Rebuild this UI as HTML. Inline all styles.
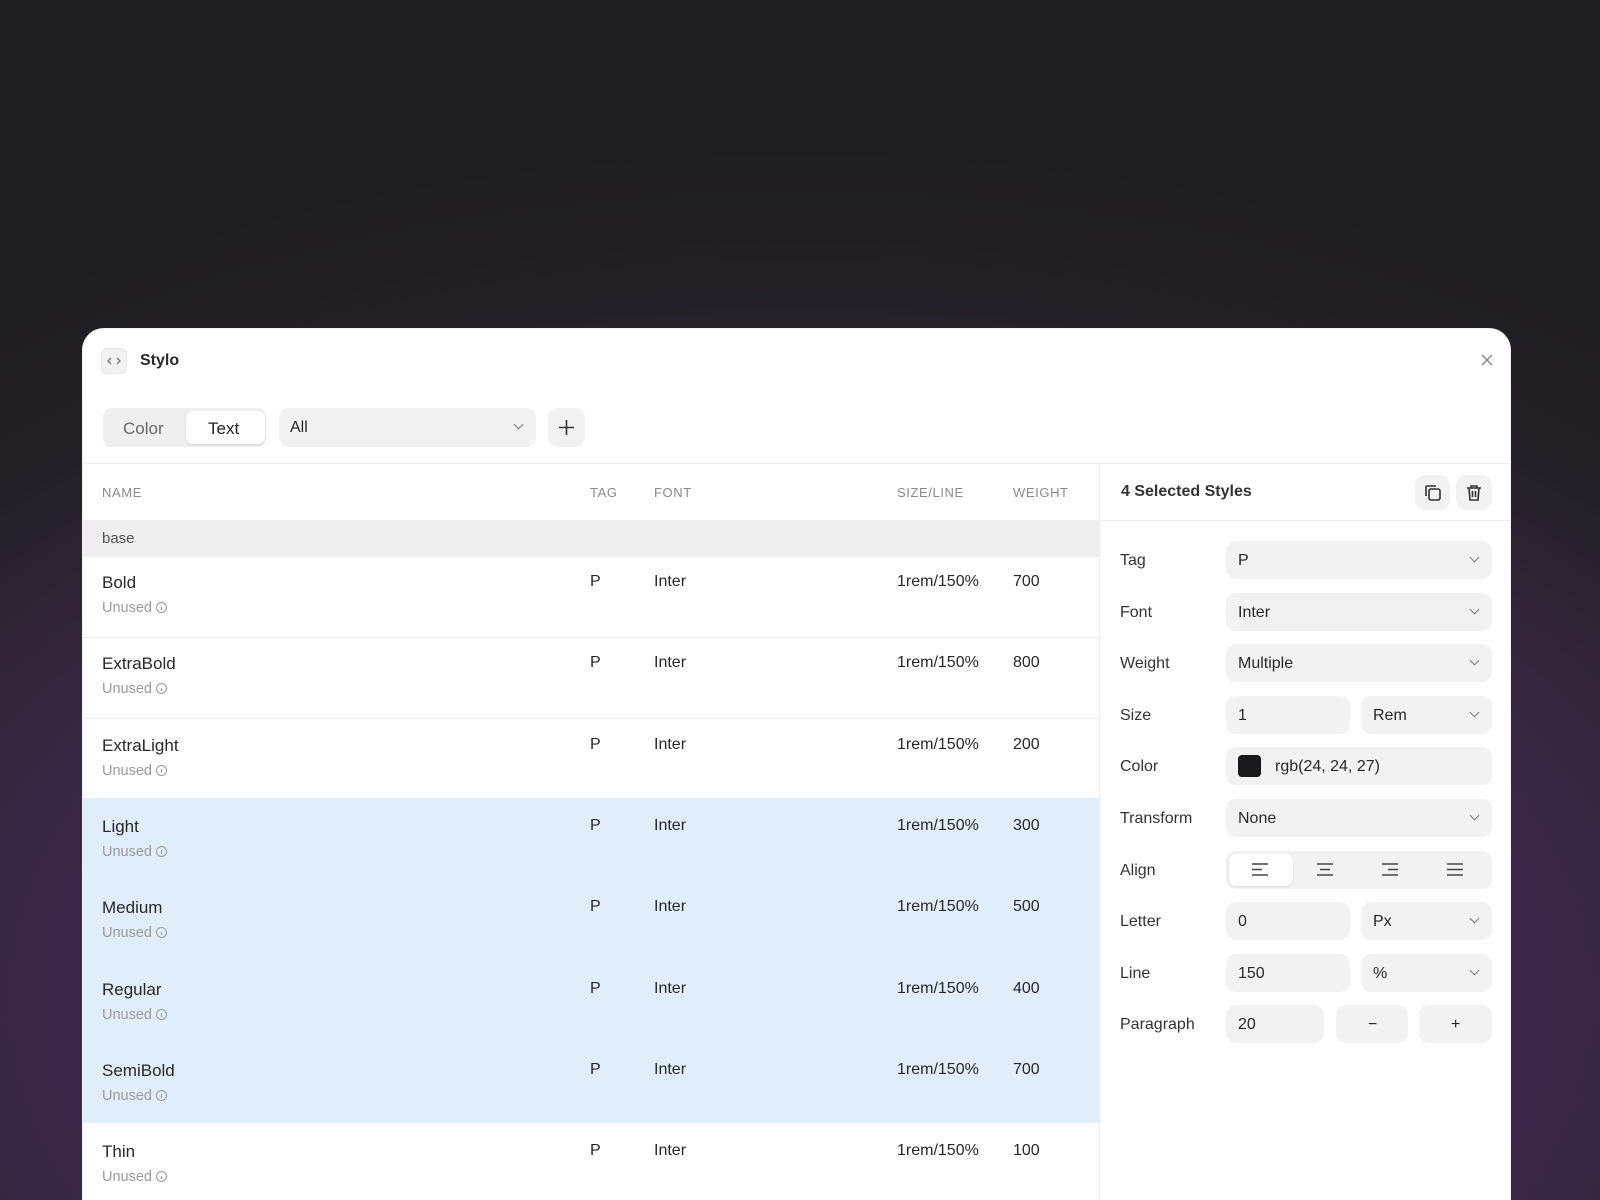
<!DOCTYPE html>
<html style="width:1600px;height:1200px;overflow:hidden;background:radial-gradient(ellipse 1400px 860px at 800px 1000px,#4a2c60 0%,#442a56 40%,#36273f 62%,#242027 82%,#1e1e20 100%) #1e1e20"><head><meta charset="utf-8"><style>
*{box-sizing:border-box;margin:0;padding:0}
body{width:1600px;height:1200px;overflow:hidden;position:relative;font-family:"Liberation Sans",sans-serif;color:#27272a;background:transparent}
.a{position:absolute}
.panel{left:82px;top:328px;width:1429px;height:872px;background:#fff;border-radius:22px 22px 0 0;border:1px solid #f0f0f0;border-bottom:none;overflow:hidden}
.ctl{background:#f2f2f2;border-radius:10px;height:38px}
.lbl{font-size:16px;color:#333}
.val{font-size:16px;color:#27272a}
.hdr{font-size:13px;color:#8a8a8a;letter-spacing:.6px}
.nm{font-size:17px;color:#27272a}
.un{font-size:14.5px;color:#9a9a9a}
.info{display:inline-block;width:11px;height:11px;border:1.2px solid #9a9a9a;border-radius:50%;vertical-align:-1px;margin-left:4px;position:relative}
.info:after{content:"";position:absolute;left:3.6px;top:3.5px;width:1.2px;height:3.5px;background:#9a9a9a}
.chev{position:absolute;right:14px;top:13px;width:7px;height:7px;border-right:1.5px solid #777;border-bottom:1.5px solid #777;transform:rotate(45deg)}
</style></head><body>
<div class="a panel">
 <div class="a" style="left:18px;top:19px;width:26px;height:26px;background:#f2f2f2;border-radius:6px;border:1px solid #e6e6e6"><svg width="26" height="26" class="a" style="left:-1px;top:-1px"><path d="M10 10l-3 3 3 3M16 10l3 3-3 3" fill="none" stroke="#777" stroke-width="1.3"/></svg></div>
 <div class="a" style="left:57px;top:23px;font-size:16px;font-weight:bold;color:#2a2a2a">Stylo</div>
 <svg class="a" style="left:1397px;top:24px" width="14" height="14"><path d="M2 2l10 10M12 2L2 12" stroke="#888" stroke-width="1.5"/></svg>
 <div class="a" style="left:20px;top:79px;width:163px;height:39px;background:#efefef;border-radius:9px"></div>
 <div class="a" style="left:103px;top:82px;width:79px;height:33px;background:#fff;border-radius:7px;box-shadow:0 1px 2px rgba(0,0,0,.12)"></div>
 <div class="a" style="left:40px;top:90px;font-size:17px;color:#666">Color</div>
 <div class="a" style="left:125px;top:90px;font-size:17px;color:#222">Text</div>
 <div class="a ctl" style="left:196px;top:79px;width:257px;height:39px"><span class="a val" style="left:11px;top:11px">All</span><div class="chev" style="top:13px"></div></div>
 <div class="a ctl" style="left:465px;top:79px;width:37px;height:39px"><svg class="a" style="left:10px;top:11px" width="17" height="17"><path d="M8.5 1v15M1 8.5h15" stroke="#333" stroke-width="1.6"/></svg></div>
 <div class="a" style="left:0;top:134px;width:1429px;height:1px;background:#ececec"></div>
 <div class="a" style="left:1016px;top:134px;width:1px;height:738px;background:#ececec"></div>
 <div class="a hdr" style="left:19px;top:156px">NAME</div>
 <div class="a hdr" style="left:507px;top:156px">TAG</div>
 <div class="a hdr" style="left:571px;top:156px">FONT</div>
 <div class="a hdr" style="left:814px;top:156px">SIZE/LINE</div>
 <div class="a hdr" style="left:930px;top:156px">WEIGHT</div>
 <div class="a" style="left:0;top:191px;width:1016px;height:37px;background:#eeeeee"></div>
 <div class="a" style="left:19px;top:201px;font-size:15px;color:#555">base</div>
 <div class="a" style="left:0;top:469px;width:1016px;height:325px;background:#e0eefc"></div>
 <div id="rows"></div>
 <div class="a" style="left:1038px;top:154px;font-size:16px;font-weight:bold;color:#333">4 Selected Styles</div>
 <div class="a ctl" style="left:1332px;top:146px;width:35px;height:35px"><svg class="a" style="left:8px;top:8px" width="20" height="20"><rect x="6" y="6" width="11" height="11" rx="2" fill="none" stroke="#333" stroke-width="1.6"/><path d="M3 13V4a1 1 0 0 1 1-1h9" fill="none" stroke="#333" stroke-width="1.6"/></svg></div>
 <div class="a ctl" style="left:1373px;top:146px;width:36px;height:35px"><svg class="a" style="left:8px;top:8px" width="20" height="20"><path d="M3 5h14M7 5V3h6v2M5 5l1 12h8l1-12M8.5 8v6M11.5 8v6" fill="none" stroke="#333" stroke-width="1.6"/></svg></div>
 <div class="a" style="left:1017px;top:191px;width:412px;height:1px;background:#ececec"></div>
 <div id="form"></div>
</div>
<script>
var r=[["Bold","700"],["ExtraBold","800"],["ExtraLight","200"],["Light","300"],["Medium","500"],["Regular","400"],["SemiBold","700"],["Thin","100"]],h="";
r.forEach(function(x,i){var t=228+i*81.3;
h+='<div class="a nm" style="left:19px;top:'+(t+16)+'px">'+x[0]+'</div><div class="a un" style="left:19px;top:'+(t+43)+'px">Unused<span class="info"></span></div>';
h+='<div class="a val" style="left:507px;top:'+(t+16)+'px">P</div><div class="a val" style="left:571px;top:'+(t+16)+'px">Inter</div><div class="a val" style="left:814px;top:'+(t+16)+'px">1rem/150%</div><div class="a val" style="left:930px;top:'+(t+16)+'px">'+x[1]+'</div>';
if(i<2)h+='<div class="a" style="left:0;top:'+(t+80)+'px;width:1016px;height:1px;background:#ececec"></div>';
});
document.getElementById('rows').outerHTML=h;
var L=["Tag","Font","Weight","Size","Color","Transform","Align","Letter","Line","Paragraph"],f="";
function box(l,w,txt,ch){return '<div class="a ctl" style="left:'+l+'px;top:TOPpx;width:'+w+'px">'+(txt?'<span class="a val" style="left:12px;top:11px">'+txt+'</span>':'')+(ch?'<div class="chev"></div>':'')+'</div>';}
L.forEach(function(n,i){var c=231+i*51.6,top=c-19,s="";
s+='<div class="a lbl" style="left:1037px;top:'+(c-8)+'px">'+n+'</div>';
if(i<3||i==5)s+=box(1143,266,["P","Inter","Multiple",0,0,"None"][i],1);
if(i==3)s+=box(1143,124,"1")+box(1278,131,"Rem",1);
if(i==7)s+=box(1143,124,"0")+box(1278,131,"Px",1);
if(i==8)s+=box(1143,124,"150")+box(1278,131,"%",1);
if(i==9)s+=box(1143,98,"20")+box(1253,72,"")+box(1336,73,"")+'<div class="a val" style="left:1285px;top:'+(c-8)+'px">−</div><div class="a val" style="left:1368px;top:'+(c-8)+'px">+</div>';
if(i==4)s+='<div class="a ctl" style="left:1143px;top:TOPpx;width:266px"><div class="a" style="left:12px;top:8px;width:23px;height:22px;background:#18181b;border-radius:4px"></div><span class="a val" style="left:49px;top:11px">rgb(24, 24, 27)</span></div>';
if(i==6){s+='<div class="a ctl" style="left:1143px;top:TOPpx;width:266px"><div class="a" style="left:3px;top:3px;width:64px;height:32px;background:#fff;border-radius:7px;box-shadow:0 1px 2px rgba(0,0,0,.1)"></div>';
[[26,"M0 1h16M0 6.5h10M0 12h16"],[91,"M0 1h16M3 6.5h10M0 12h16"],[156,"M0 1h16M6 6.5h10M0 12h16"],[221,"M0 1h16M0 6.5h16M0 12h16"]].forEach(function(p){s+='<svg class="a" style="left:'+p[0]+'px;top:12px" width="16" height="13"><path d="'+p[1]+'" stroke="#444" stroke-width="1.5"/></svg>';});
s+='</div>';}
f+=s.replace(/TOP/g,top);});
document.getElementById('form').outerHTML=f;
</script>
</body></html>
